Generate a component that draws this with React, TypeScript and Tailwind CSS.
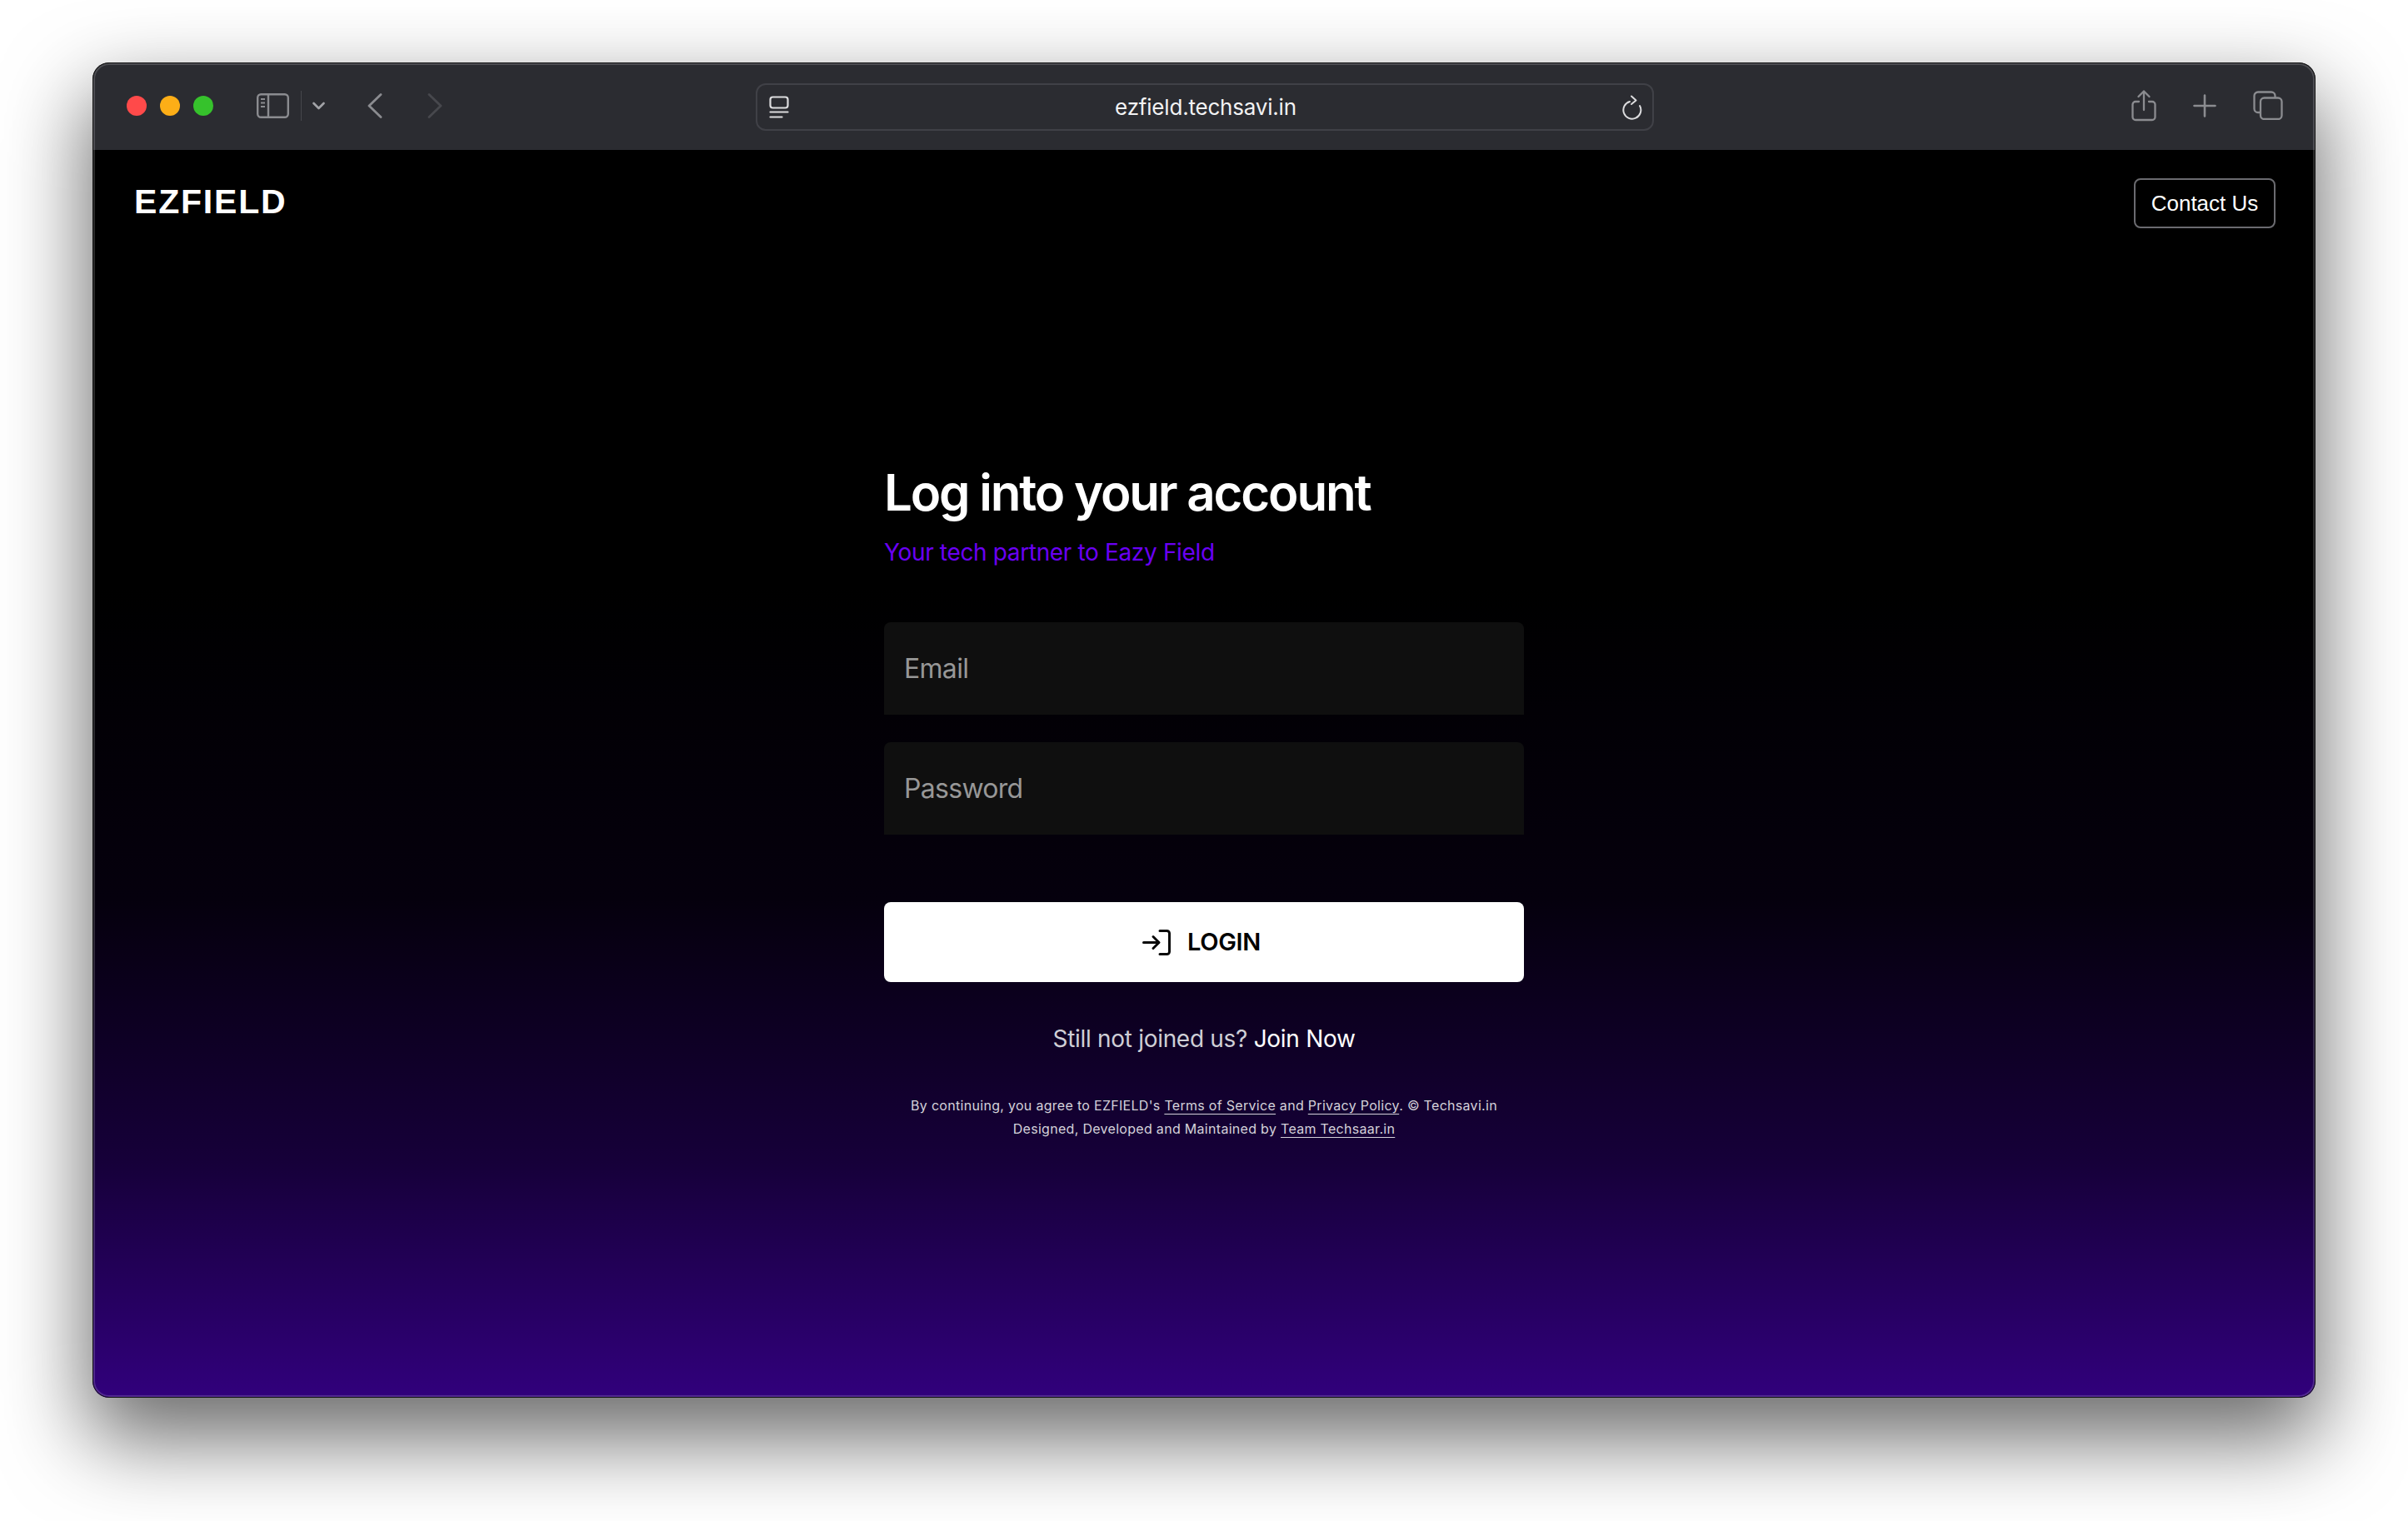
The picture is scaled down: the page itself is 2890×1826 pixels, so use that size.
import { useState } from 'react';

const inter = 'font-["Inter",sans-serif]';

function ToolbarIcons() {
  return (
    <div className="flex items-center">
      {/* traffic lights */}
      <div className="flex gap-4">
        <span className="w-6 h-6 rounded-full bg-[#ff4a4a]" />
        <span className="w-6 h-6 rounded-full bg-[#fdae17]" />
        <span className="w-6 h-6 rounded-full bg-[#36c22c]" />
      </div>
      <svg className="ml-[52px]" width="39" height="30" viewBox="0 0 39 30" fill="none" stroke="#8b8c90" strokeWidth="2.4">
        <rect x="1.2" y="1.2" width="36.6" height="27.6" rx="4" />
        <path d="M14 1.2v27.6" />
        <path d="M5 7h5M5 11.5h5M5 16h5" strokeWidth="2" />
      </svg>
      <span className="ml-[14px] w-px h-9 bg-[#46474c]" />
      <svg className="ml-[13px]" width="15" height="10" viewBox="0 0 15 10" fill="none" stroke="#a2a3a7" strokeWidth="2.6" strokeLinecap="round" strokeLinejoin="round">
        <path d="M1.5 2l6 6 6-6" />
      </svg>
      <svg className="ml-[51px]" width="18" height="30" viewBox="0 0 18 30" fill="none" stroke="#8b8c90" strokeWidth="2.8" strokeLinecap="round" strokeLinejoin="round">
        <path d="M16 1.5L2 15l14 13.5" />
      </svg>
      <svg className="ml-[54px]" width="18" height="30" viewBox="0 0 18 30" fill="none" stroke="#47484d" strokeWidth="2.8" strokeLinecap="round" strokeLinejoin="round">
        <path d="M2 1.5L16 15 2 28.5" />
      </svg>
    </div>
  );
}

function AddressBar() {
  return (
    <div className="absolute left-[796px] top-[25px] w-[1078px] h-[57px] rounded-xl border-2 border-[#404147] flex items-center justify-between pl-[14px] pr-[12px]">
      <svg width="24" height="28" viewBox="0 0 24 28" fill="none" stroke="#dcdcde" strokeWidth="2.2" strokeLinecap="round">
        <rect x="1.5" y="1.5" width="21" height="13" rx="3" />
        <path d="M1.5 19.5h21" />
        <path d="M1.5 25.5h14" />
      </svg>
      <span className={`${inter} text-[26px] leading-none tracking-[-0.2px] text-[#f2f2f3]`}>ezfield.techsavi.in</span>
      <svg width="24" height="30" viewBox="0 0 24 30" fill="none" stroke="#dcdcde" strokeWidth="2" strokeLinecap="round" strokeLinejoin="round">
        <path d="M9 8A10.500 10.500 0 1 0 21 13" />
        <path d="M11 1.500l5.500 5-5.500 4.500" />
      </svg>
    </div>
  );
}

function RightIcons() {
  return (
    <div className="flex items-center">
      <svg width="30" height="38" viewBox="0 0 30 38" fill="none" stroke="#8b8c90" strokeWidth="2.3" strokeLinecap="round" strokeLinejoin="round">
        <path d="M9 14H5a3.5 3.5 0 0 0-3.5 3.5v15A3.5 3.5 0 0 0 5 36h20a3.5 3.5 0 0 0 3.5-3.5v-15A3.5 3.5 0 0 0 25 14h-4" />
        <path d="M15 24V2" />
        <path d="M8.5 8L15 1.5 21.5 8" />
      </svg>
      <svg className="ml-[44px]" width="28" height="28" viewBox="0 0 28 28" fill="none" stroke="#8b8c90" strokeWidth="2.6" strokeLinecap="round">
        <path d="M14 1.5v25M1.5 14h25" />
      </svg>
      <svg className="ml-[44px]" width="36" height="35" viewBox="0 0 36 35" fill="none" stroke="#8b8c90" strokeWidth="2.3" strokeLinejoin="round">
        <path d="M8 26H6a4.5 4.5 0 0 1-4.500-4.500V6A4.500 4.500 0 0 1 6 1.500h16A4.500 4.500 0 0 1 26.500 6v2" />
        <rect x="9" y="8.500" width="25.500" height="25.500" rx="4.500" />
      </svg>
    </div>
  );
}

function LoginIcon() {
  return (
    <svg width="34" height="31" viewBox="0 0 34 31" fill="none" stroke="#0a0a0a" strokeWidth="3" strokeLinecap="round" strokeLinejoin="round">
      <path d="M1.500 15.500h18" />
      <path d="M13 8.500l7 7-7 7" />
      <path d="M21 1.500h8.500a3 3 0 0 1 3 3v22a3 3 0 0 1-3 3H21" />
    </svg>
  );
}

export default function App() {
  const [email, setEmail] = useState('');
  const [password, setPassword] = useState('');

  return (
    <div className="w-[2890px] h-[1826px] bg-white pl-[111px] pt-[75px] overflow-hidden">
      <div className="relative w-[2668px] h-[1603px] rounded-[20px] shadow-[0_44px_100px_6px_rgba(0,0,0,0.58)]">
        <div className="w-full h-full rounded-[20px] overflow-hidden flex flex-col">
          {/* browser toolbar */}
          <div className="relative shrink-0 h-[105px] bg-[#2b2c31] flex items-center justify-between pl-[41px] pr-[39px] pb-[2px]">
            <ToolbarIcons />
            <AddressBar />
            <RightIcons />
          </div>

          {/* page */}
          <div className="flex-1 bg-[linear-gradient(180deg,#000000_0%,#000000_35%,#05000d_60%,#160039_81%,#31007c_100%)]">
            <header className="flex items-start justify-between pt-[34px] pl-[50px] pr-[48px]">
              <div className='mt-[4px] font-["Liberation_Sans",sans-serif] font-bold text-[41px] leading-[48px] tracking-[1.8px] text-white'>EZFIELD</div>
              <button className='h-[60px] w-[170px] rounded-lg border-2 border-[#6b6b70] font-["Liberation_Sans",sans-serif] text-[26px] text-white'>
                Contact Us
              </button>
            </header>

            <main className={`${inter} mx-auto mt-[281px] w-[768px]`}>
              <h1 className="text-[60px] leading-[72px] font-semibold tracking-[-2.2px] text-white">Log into your account</h1>
              <p className="mt-[16px] text-[28px] leading-[40px] tracking-[-0.35px] text-[#6a00f4]">Your tech partner to Eazy Field</p>

              <input
                value={email}
                onChange={(e) => setEmail(e.target.value)}
                placeholder="Email"
                className="mt-[64px] block w-full h-[111px] rounded-t-lg bg-[#0f0f0f] px-6 text-[32px] tracking-[-0.7px] text-white outline-none placeholder:text-[#979797]"
              />
              <input
                type="password"
                value={password}
                onChange={(e) => setPassword(e.target.value)}
                placeholder="Password"
                className="mt-[33px] block w-full h-[111px] rounded-t-lg bg-[#0f0f0f] px-6 text-[32px] tracking-[-0.7px] text-white outline-none placeholder:text-[#979797]"
              />

              <button className="mt-[81px] w-full h-[96px] rounded-lg bg-white flex items-center justify-center gap-[20px] pr-[6px] text-[29px] tracking-[-0.3px] font-semibold text-black">
                <LoginIcon />
                LOGIN
              </button>

              <p className="mt-[50px] text-center text-[28px] leading-[36px] tracking-[-0.3px] text-[#cfcfd6]">
                Still not joined us? <a className="text-white">Join Now</a>
              </p>

              <div className="mt-[48px] text-center text-[16px] leading-[28px] tracking-[0.3px] text-[#d4d2da]">
                <p>
                  By continuing, you agree to EZFIELD's <a className="underline underline-offset-4">Terms of Service</a> and{' '}
                  <a className="underline underline-offset-4">Privacy Policy</a>. © Techsavi.in
                </p>
                <p>
                  Designed, Developed and Maintained by <a className="underline underline-offset-4">Team Techsaar.in</a>
                </p>
              </div>
            </main>
          </div>
        </div>
        {/* lit edge of the window */}
        <div className="absolute inset-0 rounded-[20px] pointer-events-none border border-[#111] shadow-[inset_0_0_0_2px_rgba(255,255,255,0.16)]" />
      </div>
    </div>
  );
}
